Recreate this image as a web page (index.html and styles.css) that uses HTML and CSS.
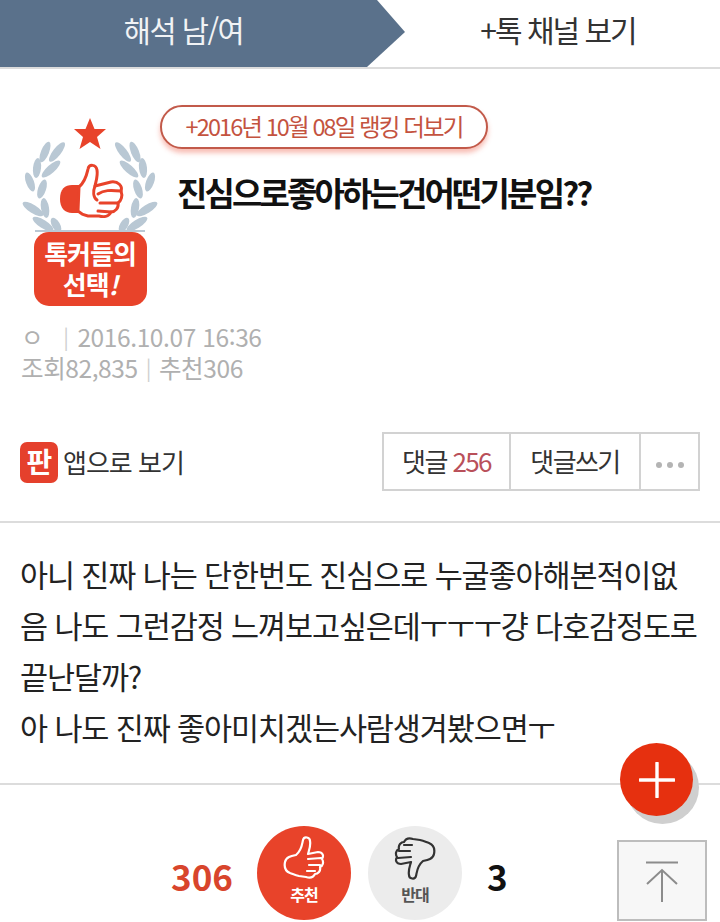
FILE: index.html
```html
<!DOCTYPE html>
<html lang="ko">
<head>
  <meta charset="UTF-8">
  <title>해석 남/여</title>
  <link rel="stylesheet" href="styles.css">
</head>
<body>
  <svg class="defs" width="0" height="0">
    <symbol id="thumbLine" viewBox="0 0 42 44">
      <path d="M13 19 C19 14 19 8 20 4 C21 0 27 1 27 5 C28 10 26 14 25 18 L35 16 C40 16 41 20 39 23 C41 26 40 30 37 31 C38 35 35 38 32 38 C30 42 26 42 23 41 L16 40 C12 39 10 38 7 37 C2 35 1 31 2 26 C3 21 8 20 13 19 Z M25 23 L38 22 M26 29 L37 29 M24 35 L32 35" fill="none" stroke="currentColor" stroke-width="2.2" stroke-linejoin="round" stroke-linecap="round"/>
    </symbol>
  </svg>

  <div class="page">
    <div class="topbar">
      <div class="tab-active">해석 남/여</div>
      <div class="tab-channel">+톡 채널 보기</div>
    </div>

    <div class="post-head">
      <div class="badge">
        <svg class="laurel" width="136" height="117" viewBox="0 0 136 117">
          <polygon points="68,3 72.5,14 84,14 75,22 78.5,34 68,27 57.5,34 61,22 52,14 63.5,14" fill="#e8432a"/>
          <g fill="#b9c8d4" id="wreathLeft">
            <ellipse cx="35" cy="37" rx="4" ry="12" transform="rotate(38 35 37)"/>
            <ellipse cx="23" cy="37" rx="4" ry="11" transform="rotate(22 23 37)"/>
            <ellipse cx="15" cy="53" rx="4" ry="10" transform="rotate(6 15 53)"/>
            <ellipse cx="29" cy="54" rx="4" ry="12" transform="rotate(48 29 54)"/>
            <ellipse cx="8" cy="67" rx="4" ry="10" transform="rotate(-20 8 67)"/>
            <ellipse cx="20" cy="74" rx="4" ry="10" transform="rotate(18 20 74)"/>
            <ellipse cx="11" cy="94" rx="4" ry="12" transform="rotate(-58 11 94)"/>
            <ellipse cx="23" cy="93" rx="4" ry="10" transform="rotate(-10 23 93)"/>
            <ellipse cx="21" cy="109" rx="4" ry="12" transform="rotate(-58 21 109)"/>
            <ellipse cx="34" cy="110" rx="4" ry="8" transform="rotate(-30 34 110)"/>
          </g>
          <use href="#wreathLeft" transform="translate(136 0) scale(-1 1)"/>
          <rect x="13" y="115" width="110" height="2" fill="#b9c8d4"/>
          <g transform="translate(38 48)">
            <path d="M19 22 H12 C5 22 0 26 0 36 C0 45 5 50 12 50 H20 Z" fill="#e8432a"/>
            <path d="M19 24 C26 18 27 10 28 6 C29 1 36 1 37 7 C38 13 36 18 35 23 L51 19 C58 18 63 23 61 28 C63 33 61 38 58 40 C59 45 55 49 51 49 C49 54 43 54 39 53 L28 53 C23 52 20 50 18 48 Z" fill="#fff" stroke="#e8432a" stroke-width="3" stroke-linejoin="round"/>
            <path d="M38 31 C44 27 50 27 61 28 M40 40 L58 40 M38 48 L51 49 M35 23 C33 28 33 34 37 37" fill="none" stroke="#e8432a" stroke-width="3" stroke-linecap="round"/>
          </g>
        </svg>
        <div class="badge-box">톡커들의<br>선택<i>!</i></div>
      </div>
      <div class="head-right">
        <div class="rank-pill">+2016년 10월 08일 랭킹 더보기</div>
        <h1 class="post-title">진심으로좋아하는건어떤기분임??</h1>
      </div>
    </div>

    <div class="meta">
      <div class="meta-line">ㅇ<span class="sep first">|</span>2016.10.07 16:36</div>
      <div class="meta-line">조회82,835<span class="sep">|</span>추천306</div>
    </div>

    <div class="action-row">
      <div class="app-link">
        <span class="app-icon">판</span>
        <span>앱으로 보기</span>
      </div>
      <div class="action-btns">
        <div class="action-btn reply">댓글 <b>256</b></div>
        <div class="action-btn write">댓글쓰기</div>
        <div class="action-btn more"><i></i><i></i><i></i></div>
      </div>
    </div>

    <div class="post-body">
      아니 진짜 나는 단한번도 진심으로 누굴좋아해본적이없<br>
      음 나도 그런감정 느껴보고싶은데ㅜㅜㅜ걍 다호감정도로<br>
      끝난달까?<br>
      아 나도 진짜 좋아미치겠는사람생겨봤으면ㅜ
    </div>

    <div class="vote-row">
      <span class="count up">306</span>
      <div class="vote-btn vote-up">
        <svg width="42" height="44"><use href="#thumbLine"/></svg>
        <span>추천</span>
      </div>
      <div class="vote-btn vote-down">
        <svg width="42" height="44" class="flip"><use href="#thumbLine"/></svg>
        <span>반대</span>
      </div>
      <span class="count down">3</span>
    </div>

    <div class="fab">
      <svg width="36" height="36" viewBox="0 0 36 36"><path d="M18 1 V35 M1 18 H35" stroke="#fff" stroke-width="3.4" stroke-linecap="round"/></svg>
    </div>
    <div class="to-top">
      <svg width="34" height="42" viewBox="0 0 34 42"><path d="M1 1.5 H33 M17 9 V41 M2 23 L17 9 L32 23" fill="none" stroke="#8c8c8c" stroke-width="2"/></svg>
    </div>
  </div>
</body>
</html>
```

FILE: styles.css
```css
* {
  box-sizing: border-box;
}

html, body {
  margin: 0;
  padding: 0;
  background: #fff;
}

body {
  font-family: "Noto Sans CJK KR", "Noto Sans", sans-serif;
  color: #222;
}

.defs {
  position: absolute;
}

.page {
  position: relative;
  width: 720px;
  height: 922px;
  overflow: hidden;
}

.topbar {
  display: flex;
  height: 69px;
  border-bottom: 2px solid #dcdcdc;
}

.tab-active {
  width: 405px;
  height: 67px;
  padding-right: 38px;
  background: #5a718b;
  color: #f1f3f5;
  font-size: 29.5px;
  letter-spacing: -1.5px;
  line-height: 58px;
  text-align: center;
  clip-path: polygon(0 0, 377px 0, 405px 32px, 367px 67px, 0 67px);
}

.tab-channel {
  flex: 1;
  padding-right: 9px;
  font-size: 30px;
  letter-spacing: -2px;
  line-height: 58px;
  text-align: center;
  color: #333;
}

.post-head {
  display: flex;
  height: 240px;
  padding: 36px 0 0 22px;
}

.badge {
  display: flex;
  flex-direction: column;
  align-items: center;
  width: 136px;
  padding-top: 10px;
}

.laurel {
  display: block;
  flex: none;
}

.badge-box {
  width: 113px;
  height: 74px;
  padding-top: 5px;
  background: #e8432a;
  border-radius: 15px;
  color: #fff;
  font-size: 26px;
  font-weight: 700;
  line-height: 31px;
  letter-spacing: -1px;
  text-align: center;
}

.badge-box i {
  font-style: italic;
}

.head-right {
  margin-left: 2px;
}

.rank-pill {
  width: 328px;
  height: 44px;
  border: 2px solid #c25a4a;
  border-radius: 22px;
  box-shadow: 0 4px 5px rgba(240, 110, 90, 0.45);
  background: #fff;
  color: #c4533f;
  font-size: 23.5px;
  letter-spacing: -1.9px;
  line-height: 38px;
  text-align: center;
}

.post-title {
  margin: 20px 0 0 17px;
  color: #111;
  font-size: 33px;
  font-weight: 700;
  letter-spacing: -2.85px;
  line-height: 46px;
  white-space: nowrap;
}

.meta {
  padding-left: 21px;
  margin-top: 12px;
  color: #b0b0b0;
  font-size: 24.5px;
  letter-spacing: -0.4px;
  line-height: 31px;
}

.meta-line {
  height: 31px;
}

.sep {
  margin: 0 8px;
  color: #d0d0d0;
  font-size: 21px;
  line-height: 0;
  position: relative;
  top: -2px;
}

.sep.first {
  margin: 0 9px 0 20px;
}

.action-row {
  display: flex;
  align-items: center;
  justify-content: space-between;
  height: 59px;
  margin-top: 49px;
  padding: 0 20px;
}

.app-link {
  display: flex;
  align-items: center;
  gap: 5px;
  font-size: 26px;
  letter-spacing: -1px;
  color: #333;
}

.app-icon {
  width: 38px;
  height: 41px;
  margin-top: 2px;
  background: #e5402c;
  border-radius: 7px;
  color: #fff;
  font-size: 28px;
  font-weight: 700;
  line-height: 38px;
  text-align: center;
}

.action-btns {
  display: flex;
  height: 59px;
  border: 2px solid #d2d2d2;
}

.action-btn {
  display: flex;
  align-items: center;
  justify-content: center;
  border-right: 2px solid #d2d2d2;
  padding-bottom: 3px;
  font-size: 26px;
  letter-spacing: -1.6px;
  color: #333;
  white-space: pre;
}

.action-btn b {
  font-weight: 400;
  color: #b9505a;
}

.reply {
  width: 127px;
}

.write {
  width: 130px;
}

.more {
  width: 57px;
  border-right: 0;
  gap: 5px;
  padding: 6px 0 0;
}

.more i {
  width: 6px;
  height: 6px;
  border-radius: 50%;
  background: #b4b4b4;
}

.post-body {
  height: 264px;
  margin-top: 30px;
  padding: 26px 0 0 20px;
  border-top: 2px solid #dcdcdc;
  border-bottom: 2px solid #dcdcdc;
  font-size: 30.5px;
  letter-spacing: -1.1px;
  line-height: 51px;
  color: #222;
  white-space: nowrap;
}

.vote-row {
  display: flex;
  align-items: center;
  height: 96px;
  margin-top: 40px;
  padding-left: 171px;
}

.count {
  padding-top: 5px;
  font-size: 35px;
  font-weight: 700;
  line-height: 91px;
}

.count.up {
  width: 86px;
  color: #d8452c;
}

.count.down {
  margin-left: 25px;
  color: #111;
}

.vote-btn {
  display: flex;
  flex-direction: column;
  align-items: center;
  width: 94px;
  height: 94px;
  padding-top: 10px;
  border-radius: 50%;
  font-size: 16px;
  font-weight: 700;
  letter-spacing: -1px;
  line-height: 20px;
}

.vote-btn svg {
  display: block;
}

.vote-btn span {
  margin-top: 4px;
}

.vote-up {
  background: #e8432a;
  color: #fff;
}

.vote-down {
  margin-left: 17px;
  background: #ececec;
  color: #555;
}

.vote-down svg {
  color: #333;
}

.flip {
  transform: rotate(180deg);
}

.fab {
  position: absolute;
  top: 743px;
  left: 620px;
  display: flex;
  align-items: center;
  justify-content: center;
  width: 73px;
  height: 73px;
  border-radius: 50%;
  background: #e6300f;
  box-shadow: 6px 8px 0 #cfcfcf;
}

.to-top {
  position: absolute;
  top: 840px;
  left: 617px;
  display: flex;
  align-items: center;
  justify-content: center;
  width: 90px;
  height: 81px;
  padding-top: 2px;
  border: 2px solid #bdbdbd;
  background: #f7f7f7;
}
```
